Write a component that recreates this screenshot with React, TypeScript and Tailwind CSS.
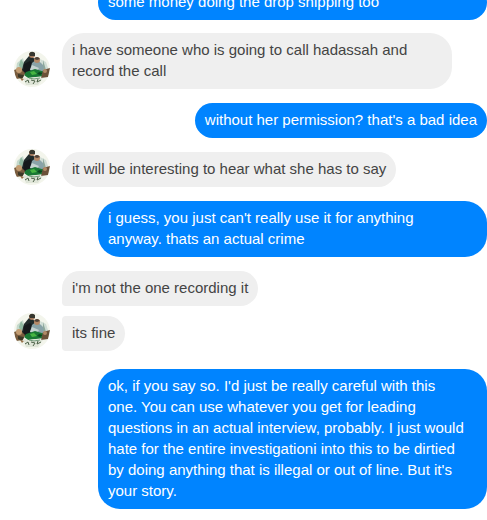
type Message = {
  lines: string[];
  mine?: boolean;
  avatar?: boolean;
  gap: string;
  shape: string;
};

const messages: Message[] = [
  { lines: ["some money doing the drop shipping too"], mine: true, gap: "-mt-[15px]", shape: "w-full rounded-[22px]" },
  {
    lines: ["i have someone who is going to call hadassah and", "record the call"],
    avatar: true,
    gap: "mt-[13px]",
    shape: "w-full rounded-[22px]",
  },
  { lines: ["without her permission? that's a bad idea"], mine: true, gap: "mt-3.5", shape: "rounded-[18px]" },
  { lines: ["it will be interesting to hear what she has to say"], avatar: true, gap: "mt-3.5", shape: "rounded-[18px]" },
  {
    lines: ["i guess, you just can't really use it for anything", "anyway. thats an actual crime"],
    mine: true,
    gap: "mt-3.5",
    shape: "w-full rounded-[22px]",
  },
  { lines: ["i'm not the one recording it"], gap: "mt-3.5", shape: "rounded-[18px] rounded-bl-[4px]" },
  { lines: ["its fine"], avatar: true, gap: "mt-2.5", shape: "rounded-[18px] rounded-l-[4px]" },
  {
    lines: [
      "ok, if you say so. I'd just be really careful with this",
      "one. You can use whatever you get for leading",
      "questions in an actual interview, probably. I just would",
      "hate for the entire investigationi into this to be dirtied",
      "by doing anything that is illegal or out of line. But it's",
      "your story.",
    ],
    mine: true,
    gap: "mt-[18px]",
    shape: "w-full rounded-[22px]",
  },
];

function Avatar() {
  return (
    <svg viewBox="0 0 36 36" role="img" aria-label="Profile picture" className="-mt-1 mb-0.5 size-9 shrink-0 self-end rounded-full">
      <rect width="36" height="36" fill="#f3f5ec" />
      <path d="M3 12l6-5 2 8-5 5-4-1z" fill="#c5d9cd" />
      <path d="M7 8l3 5-3 6-2-5z" fill="#8fb8a0" />
      <path d="M26 8l6 3 3 9-7 1z" fill="#d0ddd5" />
      <path d="M29 9l3 10-3-1z" fill="#8ea99c" />
      <path d="M15 5l-5 6-3 11 7 2 8-5 0-10-5-4z" fill="#202b2b" />
      <path d="M10 13l6-3 4 4-3 8-8 1z" fill="#15191c" />
      <circle cx="18" cy="4" r="3" fill="#a47a5d" />
      <path d="M15 3q2-4 6-1v3h-5z" fill="#36372f" />
      <path d="M18 12l5-4 6 6 1 7-8 2-6-4z" fill="#89a3a8" />
      <circle cx="23" cy="9" r="3" fill="#b48968" />
      <path d="M20 8q3-4 6 0l-3 1z" fill="#504238" />
      <path d="M18 14l7 3-2 3-7-1z" fill="#c5d3d1" />
      <path d="M12 21l9-3 10 3-1 4-16 2-4-3z" fill="#197834" />
      <path d="M16 21l4-1 3 3-5 1z" fill="#46b541" />
      <path d="M25 21l4 1-3 2-3-1z" fill="#0a461f" />
      <path d="M0 19l6-2 5 5-2 5-7 1z" fill="#795c3e" />
      <circle cx="5" cy="19" r="3" fill="#c39d72" />
      <path d="M4 23l6 1-2 4-4-2z" fill="#3c3827" />
      <path d="M29 19l7-2-2 9-7 1z" fill="#6b5138" />
      <circle cx="31" cy="20" r="2" fill="#b08a67" />
      <path d="M9 26l6 1 7-1 7 1-5 7H12z" fill="#dfe5d8" />
      <path d="M6 27l4 1-2 2z" fill="#9a754c" />
      <path d="M11 31l3-2 1 3m2-3l4 1-2 3m5-5l-1 3 4-2" fill="none" stroke="#4c6047" strokeWidth="1" />
      <path d="M15 27l5 1 6-1" fill="none" stroke="#719878" strokeWidth="1" />
    </svg>
  );
}

export default function App() {
  return (
    <main
      aria-label="Conversation"
      className="flex h-screen flex-col overflow-hidden bg-white pl-3.5 font-['Liberation_Sans',Arial,sans-serif] text-[15px] leading-[21px]"
    >
      {messages.map((m) => (
        <div key={m.lines[0]} className={`flex shrink-0 ${m.mine ? "justify-end" : "gap-3"} ${m.gap}`}>
          {!m.mine && (m.avatar ? <Avatar /> : <div className="w-9 shrink-0" />)}
          <p
            className={`px-2.5 pt-1.5 pb-2 ${m.shape} ${
              m.mine ? "max-w-[389px] bg-[#0084ff] text-white" : "max-w-[390px] bg-[#efefef] text-[#444444]"
            }`}
          >
            {m.lines.map((line) => (
              <span key={line} className="block">
                {line}
              </span>
            ))}
          </p>
        </div>
      ))}
    </main>
  );
}
